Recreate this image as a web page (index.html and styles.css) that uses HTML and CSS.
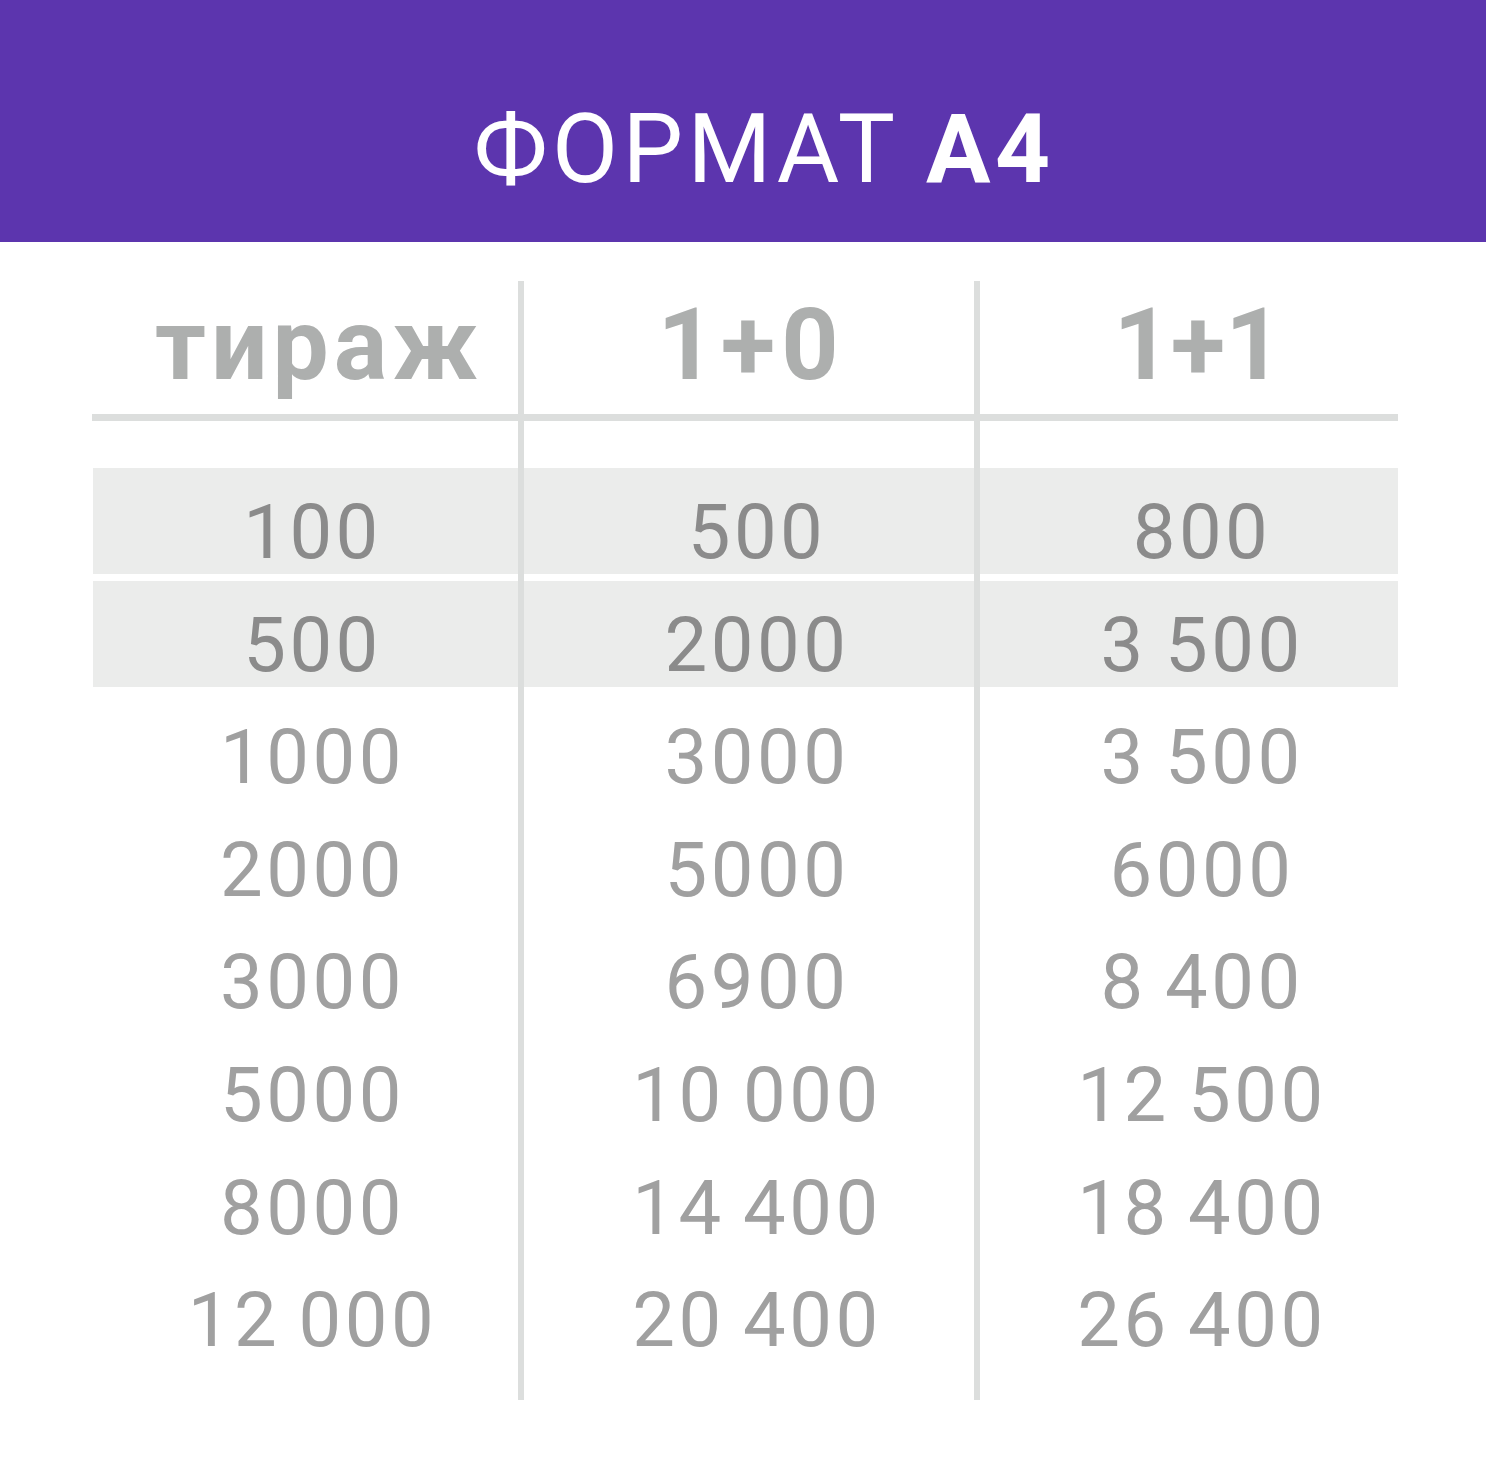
FILE: index.html
```html
<!DOCTYPE html>
<html lang="ru">
<head>
<meta charset="utf-8">
<title>Формат А4</title>
<link rel="stylesheet" href="styles.css">
</head>
<body>
<header class="banner">
  <h1 class="title">ФОРМАТ <b>А4</b></h1>
</header>
<main class="table">
  <div class="vline vline-1"></div>
  <div class="vline vline-2"></div>
  <div class="head">
    <div class="hcell h1">тираж</div>
    <div class="hcell h2">1+0</div>
    <div class="hcell h3">1+1</div>
  </div>
  <div class="rule"></div>
  <div class="body">
    <div class="row shaded"><div class="cell c1">100</div><div class="cell c2">500</div><div class="cell c3">800</div></div>
    <div class="row shaded"><div class="cell c1">500</div><div class="cell c2">2000</div><div class="cell c3">3 500</div></div>
    <div class="row"><div class="cell c1">1000</div><div class="cell c2">3000</div><div class="cell c3">3 500</div></div>
    <div class="row"><div class="cell c1">2000</div><div class="cell c2">5000</div><div class="cell c3">6000</div></div>
    <div class="row"><div class="cell c1">3000</div><div class="cell c2">6900</div><div class="cell c3">8 400</div></div>
    <div class="row"><div class="cell c1">5000</div><div class="cell c2">10 000</div><div class="cell c3">12 500</div></div>
    <div class="row"><div class="cell c1">8000</div><div class="cell c2">14 400</div><div class="cell c3">18 400</div></div>
    <div class="row"><div class="cell c1">12 000</div><div class="cell c2">20 400</div><div class="cell c3">26 400</div></div>
  </div>
</main>
</body>
</html>
```

FILE: styles.css
```css
html, body {
  margin: 0;
  padding: 0;
  background: #ffffff;
}
body {
  width: 1486px;
  height: 1484px;
  font-family: Roboto, "Noto Sans", Arial, sans-serif;
}
.banner {
  height: 242px;
  background: #5c35ae;
  box-sizing: border-box;
  padding-top: 56px;
  text-align: center;
}
.title {
  margin: 0;
  font-size: 96px;
  line-height: 186px;
  font-weight: 400;
  color: #ffffff;
  letter-spacing: 4.5px;
  padding-left: 42px;
}
.title b {
  font-weight: 700;
}
.table {
  position: relative;
  margin: 39px 0 0 93px;
  width: 1305px;
}
.vline {
  position: absolute;
  top: 0;
  width: 6px;
  height: 1119px;
  background: #dcdedd;
  z-index: 2;
}
.vline-1 { left: 425px; }
.vline-2 { left: 881px; }
.head, .row {
  display: grid;
  grid-template-columns: 425px 456px 424px;
}
.hcell {
  text-align: center;
  font-size: 100px;
  font-weight: 700;
  line-height: 100px;
  padding-top: 14px;
  padding-bottom: 19px;
  color: #adafae;
}
.h1 { padding-left: 27px; letter-spacing: 5px; }
.h2 { padding-left: 10px; letter-spacing: 6px; }
.h3 { padding-left: 24px; }
.rule {
  height: 7px;
  background: #dcdedd;
  margin-left: -1px;
}
.body {
  padding-top: 47px;
}
.row {
  height: 106px;
  margin-bottom: 6.6px;
}
.row.shaded {
  background: #ebeceb;
}
.row.shaded + .row.shaded {
  margin-top: 2px;
}
.cell {
  text-align: center;
  font-size: 76px;
  line-height: 84px;
  padding-top: 22px;
  color: #a0a0a0;
  letter-spacing: 3.5px;
  word-spacing: -4px;
}
.shaded .cell {
  color: #8b8b8b;
}
.c1 { padding-left: 14px; }
.c2 { padding-left: 22px; }
.c3 { padding-left: 32px; }
```
